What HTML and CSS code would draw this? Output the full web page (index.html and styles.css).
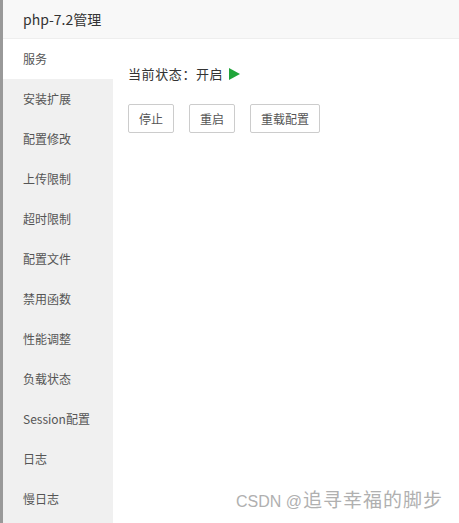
FILE: index.html
```html
<!DOCTYPE html>
<html>
<head>
    <title>php-7.2管理</title>
    <link rel="stylesheet" href="styles.css">
</head>
<body>
    <div class="page">
        <div class="backdrop"></div>
        <div class="layer">
            <div class="layer-title">php-7.2管理</div>
            <div class="layer-body">
                <ul class="menu">
                    <li class="active">服务</li>
                    <li>安装扩展</li>
                    <li>配置修改</li>
                    <li>上传限制</li>
                    <li>超时限制</li>
                    <li>配置文件</li>
                    <li>禁用函数</li>
                    <li>性能调整</li>
                    <li>负载状态</li>
                    <li>Session配置</li>
                    <li>日志</li>
                    <li>慢日志</li>
                </ul>
                <div class="content">
                    <p class="status">当前状态：<span>开启</span><span class="play"></span></p>
                    <div class="actions">
                        <button class="btn">停止</button>
                        <button class="btn">重启</button>
                        <button class="btn">重载配置</button>
                    </div>
                </div>
            </div>
        </div>
        <div class="watermark"><span class="latin">CSDN @</span>追寻幸福的脚步</div>
    </div>
</body>
</html>
```

FILE: styles.css
```css
body {
    margin: 0;
    font-family: "Noto Sans CJK SC", "Liberation Sans", sans-serif;
    color: #555;
    background: #fff;
}
.page {
    display: flex;
    height: 523px;
    position: relative;
    overflow: hidden;
}
.backdrop {
    width: 3px;
    background: #999;
    flex-shrink: 0;
}
.layer {
    flex: 1;
    display: flex;
    flex-direction: column;
}
.layer-title {
    height: 38px;
    line-height: 38px;
    padding-left: 20px;
    font-size: 14px;
    color: #333;
    background: #f8f8f8;
    border-bottom: 1px solid #eee;
}
.layer-body {
    flex: 1;
    display: flex;
}
.menu {
    list-style: none;
    margin: 0;
    padding: 0;
    width: 110px;
    background: #f0f0f0;
}
.menu li {
    height: 40px;
    line-height: 40px;
    padding-left: 20px;
    font-size: 12px;
    color: #555;
}
.menu li.active {
    background: #fff;
}
.content {
    flex: 1;
    padding: 24px 15px;
}
.status {
    margin: 0;
    font-size: 13px;
    letter-spacing: 0.6px;
    line-height: 22px;
    color: #333;
    display: flex;
    align-items: center;
}
.play {
    display: inline-block;
    width: 0;
    height: 0;
    margin-left: 6px;
    border-top: 6px solid transparent;
    border-bottom: 6px solid transparent;
    border-left: 11px solid #20a53a;
}
.actions {
    margin-top: 19px;
    display: flex;
    gap: 15px;
}
.btn {
    height: 29px;
    padding: 0 10px;
    font-family: inherit;
    font-size: 12px;
    color: #555;
    background: #fff;
    border: 1px solid #ccc;
    border-radius: 2px;
}
.watermark {
    position: absolute;
    right: 16px;
    bottom: 8px;
    font-size: 19px;
    letter-spacing: 1px;
    line-height: 26px;
    color: #b0b0b0;
}
.watermark .latin {
    font-family: "Liberation Sans", sans-serif;
    font-size: 16px;
    letter-spacing: 0;
    margin-right: 1px;
}
```
